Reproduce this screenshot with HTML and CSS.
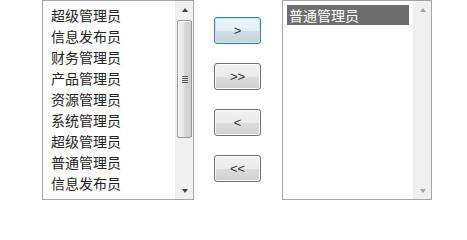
FILE: index.html
```html
<!DOCTYPE html>
<html>
<head>
<meta charset="utf-8">
<link rel="stylesheet" href="styles.css">
</head>
<body>
<div class="wrap">
  <div class="box box-left">
    <ul class="items items-left">
      <li>超级管理员</li>
      <li>信息发布员</li>
      <li>财务管理员</li>
      <li>产品管理员</li>
      <li>资源管理员</li>
      <li>系统管理员</li>
      <li>超级管理员</li>
      <li>普通管理员</li>
      <li>信息发布员</li>
    </ul>
    <div class="sb">
      <div class="sb-btn"><span class="arr-up"></span></div>
      <div class="sb-track">
        <div class="thumb"><span class="grip"></span></div>
      </div>
      <div class="sb-btn"><span class="arr-down"></span></div>
    </div>
  </div>
  <div class="buttons">
    <button class="btn btn-focus">&gt;</button>
    <button class="btn">&gt;&gt;</button>
    <button class="btn">&lt;</button>
    <button class="btn">&lt;&lt;</button>
  </div>
  <div class="box box-right">
    <ul class="items items-right">
      <li class="sel">普通管理员</li>
    </ul>
    <div class="sb sb-off">
      <div class="sb-btn"><span class="arr-up"></span></div>
      <div class="sb-track"></div>
      <div class="sb-btn"><span class="arr-down"></span></div>
    </div>
  </div>
</div>
</body>
</html>
```
FILE: styles.css
```css
html, body {
  margin: 0;
  padding: 0;
  background: #ffffff;
}
.wrap {
  display: flex;
  align-items: flex-start;
  padding-left: 42px;
  font-family: "Noto Sans CJK SC", "Noto Sans", sans-serif;
}
.box {
  display: flex;
  height: 198px;
  border: 1px solid #a5a5a5;
  background: #fff;
}
.box-left { width: 150px; }
.box-right { width: 148px; margin-left: 21px; }
.items {
  list-style: none;
  margin: 0;
  flex: 1;
  overflow: hidden;
}
.items-left { padding: 4px 0 0 8px; }
.items-right { padding: 4px 4px 0 4px; }
.items li {
  height: 21px;
  line-height: 21px;
  font-size: 14px;
  color: #222;
  white-space: nowrap;
}
.items-right li { padding-left: 2px; height: 20px; line-height: 20px; }
.items li.sel {
  background: #6e6e6e;
  color: #fff;
}
.sb {
  width: 17px;
  display: flex;
  flex-direction: column;
  background: #f0f0f0;
  border-left: 1px solid #ececec;
}
.sb-btn {
  height: 17px;
  display: flex;
  align-items: center;
  justify-content: center;
}
.sb-track {
  flex: 1;
  padding: 2px 1px;
}
.arr-up, .arr-down {
  width: 0;
  height: 0;
  border-left: 3.5px solid transparent;
  border-right: 3.5px solid transparent;
}
.arr-up { border-bottom: 4px solid #404040; }
.arr-down { border-top: 4px solid #404040; }
.sb-off .arr-up { border-bottom-color: #a3a3a3; }
.sb-off .arr-down { border-top-color: #a3a3a3; }
.thumb {
  height: 116px;
  border: 1px solid #979797;
  border-radius: 2px;
  background: linear-gradient(to right, #f2f2f2 0%, #e6e6e6 45%, #d6d6d6 55%, #cfcfcf 100%);
  box-shadow: inset 1px 1px 0 #fdfdfd;
  display: flex;
  align-items: center;
  justify-content: center;
}
.grip {
  width: 6px;
  height: 7px;
  background: repeating-linear-gradient(to bottom, #5a5a5a 0, #5a5a5a 1px, transparent 1px, transparent 2px);
}
.buttons {
  display: flex;
  flex-direction: column;
  gap: 19px;
  margin-left: 20px;
  padding-top: 17px;
}
.btn {
  width: 47px;
  height: 27px;
  margin: 0;
  padding: 0 0 1px 0;
  border: 1px solid #707070;
  border-radius: 3px;
  background: linear-gradient(to bottom, #f2f2f2 0%, #ebebeb 50%, #dddddd 51%, #cfcfcf 100%);
  box-shadow: inset 0 0 0 1px #fcfcfc;
  font-family: "Liberation Sans", sans-serif;
  font-size: 13px;
  color: #333;
  letter-spacing: 0;
}
.btn-focus {
  border-color: #3c7fb1;
  background: linear-gradient(to bottom, #eaf6fd 0%, #e3eff6 50%, #d3dde3 51%, #c8d3da 100%);
  box-shadow: inset 0 0 0 1px #c9e6f7;
}
```
